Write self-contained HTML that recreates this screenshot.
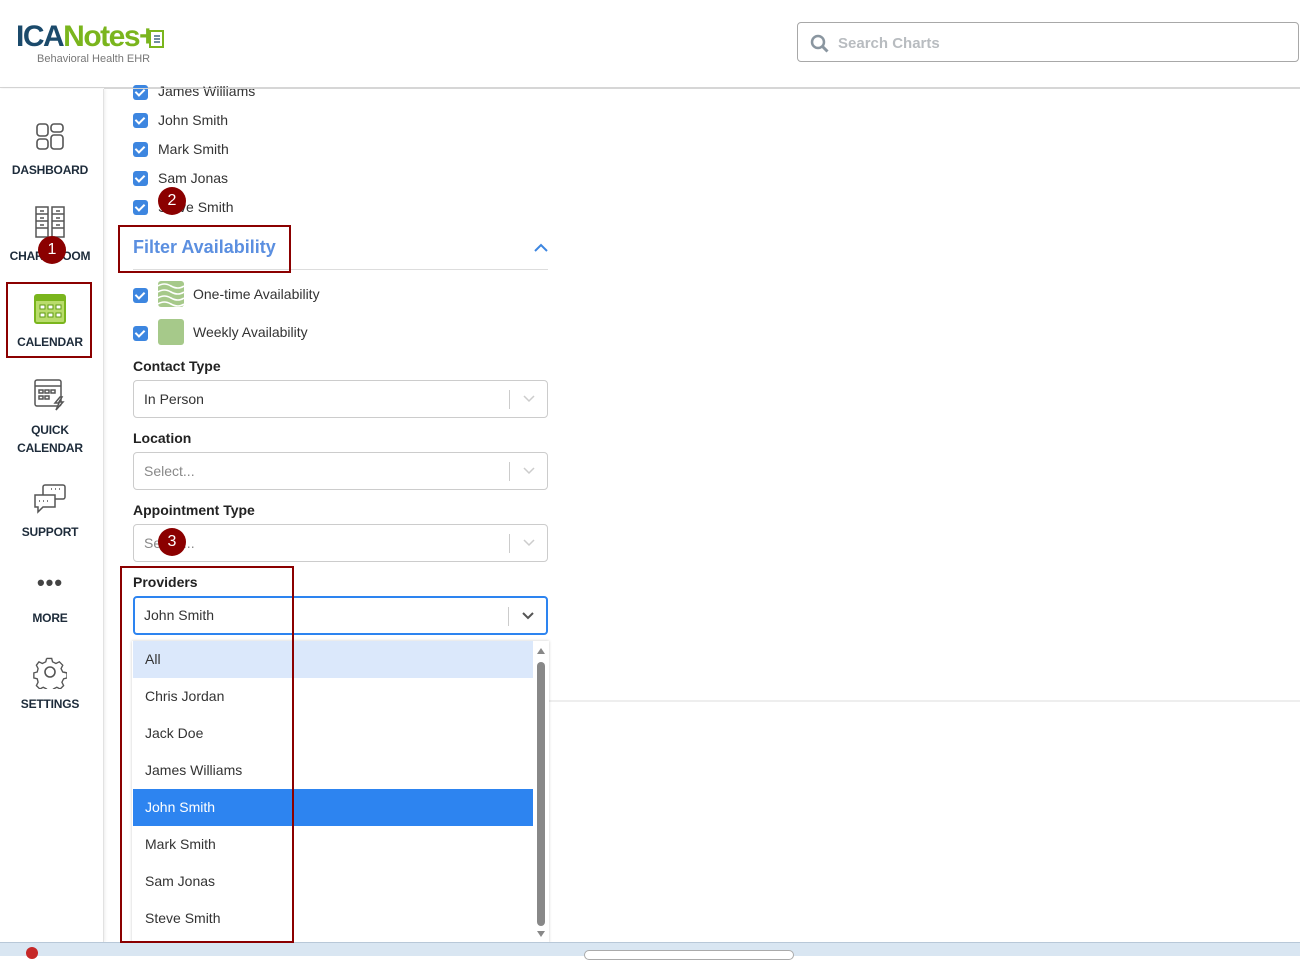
<!DOCTYPE html>
<html><head><meta charset="utf-8">
<style>
*{box-sizing:border-box;margin:0;padding:0}
body{width:1300px;height:956px;overflow:hidden;background:#fff;font-family:"Liberation Sans",sans-serif;position:relative;color:#222}
.abs{position:absolute}
.hdr{left:0;top:0;width:1300px;height:88px;border-bottom:1px solid #d6d6d6}
.side{left:0;top:89px;width:104px;height:853px;border-right:1px solid #e2e2e2;box-shadow:1px 0 3px rgba(0,0,0,.08)}
.nav{position:absolute;left:0;width:100px;text-align:center;font-size:12px;font-weight:bold;color:#1d2b3a;letter-spacing:-.2px}
.cb{position:absolute;left:133px;width:15px;height:15px;background:#3d86e0;border-radius:3px}
.cb:after{content:"";position:absolute;left:4px;top:2px;width:4px;height:7px;border:solid #fff;border-width:0 2px 2px 0;transform:rotate(45deg)}
.lbl{position:absolute;left:158px;font-size:14px;color:#333}
.fl{position:absolute;left:133px;font-size:14px;font-weight:bold;color:#222}
.sel{position:absolute;left:133px;width:415px;height:38px;border:1px solid #ccc;border-radius:4px;font-size:14px;color:#333;padding:10px 10px}
.sel .sep{position:absolute;right:37px;top:9px;width:1px;height:19px;background:#ccc}
.sel svg{position:absolute;right:12px;top:14px}
.ph{color:#888}
.red{position:absolute;border:2px solid #8b0000}
.num{position:absolute;width:28px;height:28px;border-radius:50%;background:#8b0000;color:#fff;font-size:16px;text-align:center;line-height:28px}
.opt{position:absolute;left:133px;width:400px;height:37px;font-size:14px;color:#333;padding:10px 12px}
</style></head><body>
<div class="abs hdr">
 <div class="abs" style="left:16px;top:20px;font-size:30px;font-weight:bold;letter-spacing:-1.5px;line-height:34px"><span style="color:#1b4a6b">ICA</span><span style="color:#7ab51d">Notes</span><span style="color:#7ab51d">+</span></div>
 <svg class="abs" style="left:148px;top:28px" width="20" height="22"><rect x="2" y="3" width="13" height="16" fill="#fff" stroke="#7ab51d" stroke-width="2"/><path d="M6 8h6M6 11h6M6 14h6" stroke="#1b4a6b" stroke-width="1.3"/></svg>
 <div class="abs" style="left:37px;top:53px;font-size:11px;color:#777">Behavioral Health EHR</div>
 <div class="abs" style="left:797px;top:22px;width:502px;height:40px;border:1px solid #a8a8a8;border-radius:4px">
  <svg class="abs" style="left:12px;top:11px" width="20" height="20"><circle cx="8" cy="8" r="6" fill="none" stroke="#8a96a0" stroke-width="2.5"/><path d="M12.5 12.5l5 5" stroke="#8a96a0" stroke-width="3"/></svg>
  <div class="abs" style="left:40px;top:12px;font-size:15px;font-weight:bold;color:#b8bcc0">Search Charts</div>
 </div>
</div>
<div class="abs side"></div>
<svg class="abs" style="left:36px;top:123px" width="28" height="28" fill="none" stroke="#555" stroke-width="1.6"><rect x="1" y="1" width="11" height="12" rx="3"/><rect x="15" y="1" width="12" height="8" rx="3"/><rect x="1" y="16" width="11" height="10" rx="3"/><rect x="15" y="12" width="12" height="14" rx="3"/></svg>
<div class="nav" style="top:163px">DASHBOARD</div>
<svg class="abs" style="left:34px;top:206px" width="32" height="32" fill="none" stroke="#555" stroke-width="1.5"><rect x="2" y="1" width="12" height="30"/><rect x="18" y="1" width="12" height="30"/><path d="M2 8h12M2 15h12M2 22h12M18 8h12M18 15h12M18 22h12M6 5h4M22 5h4M6 12h4M22 12h4M6 19h4M22 19h4"/></svg>
<div class="nav" style="top:249px">CHART ROOM</div>
<div class="num" style="left:38px;top:236px">1</div>
<div class="red" style="left:6px;top:282px;width:86px;height:76px"></div>
<svg class="abs" style="left:34px;top:293px" width="32" height="32"><rect x="1" y="2" width="30" height="28" rx="2" fill="#b9dc6c" stroke="#7ab51d" stroke-width="2"/><rect x="1" y="2" width="30" height="6" fill="#7ab51d"/><g fill="#fff" stroke="#5e9a12" stroke-width="1"><rect x="6" y="12" width="5" height="4"/><rect x="14" y="12" width="5" height="4"/><rect x="22" y="12" width="5" height="4"/><rect x="6" y="20" width="5" height="4"/><rect x="14" y="20" width="5" height="4"/><rect x="22" y="20" width="5" height="4"/></g></svg>
<div class="nav" style="top:335px">CALENDAR</div>
<svg class="abs" style="left:34px;top:379px" width="32" height="32" fill="none" stroke="#555" stroke-width="1.5"><rect x="1" y="1" width="26" height="26" rx="2"/><path d="M1 7h26"/><rect x="5" y="11" width="4" height="3"/><rect x="11" y="11" width="4" height="3"/><rect x="17" y="11" width="4" height="3"/><rect x="5" y="17" width="4" height="3"/><rect x="11" y="17" width="4" height="3"/><path d="M26 18l-5 6h4l-3 7 7-8h-4l3-5z" fill="#fff"/></svg>
<div class="nav" style="top:421px;line-height:18px">QUICK<br>CALENDAR</div>
<svg class="abs" style="left:33px;top:484px" width="34" height="30" fill="none" stroke="#555" stroke-width="1.5"><rect x="10" y="1" width="22" height="14" rx="2"/><path d="M2 11h20v12H10l-5 5v-5H2z" fill="#fff"/><path d="M18 5h1M22 5h1M26 5h1M6 17h1M10 17h1M14 17h1"/></svg>
<div class="nav" style="top:525px">SUPPORT</div>
<div class="nav" style="top:570px;font-size:22px;color:#444;letter-spacing:1px">•••</div>
<div class="nav" style="top:611px">MORE</div>
<svg class="abs" style="left:33px;top:655px" width="34" height="34" fill="none" stroke="#555" stroke-width="1.6"><path d="M14 2h6l1 4 4 2 4-2 4 4-2 4 2 4 4 1v0M14 2l-1 4-4 2-4-2-3 4 2 4-1 4-4 1v6l4 1 1 4-2 4 4 4 4-2 4 2 1 4h6l1-4 4-2 4 2 4-4-2-4 2-4 4-1v-6l-4-1" transform="scale(.85) translate(2 2)"/><circle cx="17" cy="17" r="5"/></svg>
<div class="nav" style="top:697px">SETTINGS</div>

<div class="cb" style="top:85px"></div><div class="lbl" style="top:83px">James Williams</div>
<div class="abs" style="left:104px;top:88px;width:1196px;height:1px;background:#d6d6d6"></div>
<div class="cb" style="top:113px"></div><div class="lbl" style="top:112px">John Smith</div>
<div class="cb" style="top:142px"></div><div class="lbl" style="top:141px">Mark Smith</div>
<div class="cb" style="top:171px"></div><div class="lbl" style="top:170px">Sam Jonas</div>
<div class="cb" style="top:200px"></div><div class="lbl" style="top:199px">Steve Smith</div>
<div class="num" style="left:158px;top:187px">2</div>

<div class="abs" style="left:133px;top:237px;font-size:18px;font-weight:bold;color:#5b8fe0">Filter Availability</div>
<svg class="abs" style="left:534px;top:243px" width="14" height="10"><path d="M1 8l6-6 6 6" fill="none" stroke="#3d86e0" stroke-width="2"/></svg>
<div class="abs" style="left:133px;top:269px;width:415px;height:1px;background:#ddd"></div>
<div class="red" style="left:118px;top:225px;width:173px;height:48px"></div>
<div class="cb" style="top:288px"></div>
<svg class="abs" style="left:158px;top:281px" width="26" height="26"><rect width="26" height="26" rx="3" fill="#a6c98a"/><path d="M0 5q6-4 13 0t13 0M0 11q6-4 13 0t13 0M0 17q6-4 13 0t13 0M0 23q6-4 13 0t13 0" stroke="#fff" stroke-width="1.6" fill="none"/></svg>
<div class="abs" style="left:193px;top:286px;font-size:14px;color:#333">One-time Availability</div>
<div class="cb" style="top:326px"></div>
<div class="abs" style="left:158px;top:319px;width:26px;height:26px;border-radius:3px;background:#a6c98a"></div>
<div class="abs" style="left:193px;top:324px;font-size:14px;color:#333">Weekly Availability</div>

<div class="fl" style="top:358px">Contact Type</div>
<div class="sel" style="top:380px">In Person<div class="sep"></div><svg width="12" height="8"><path d="M1 1l5 5 5-5" fill="none" stroke="#ccc" stroke-width="1.5"/></svg></div>
<div class="fl" style="top:430px">Location</div>
<div class="sel" style="top:452px"><span class="ph">Select...</span><div class="sep"></div><svg width="12" height="8"><path d="M1 1l5 5 5-5" fill="none" stroke="#ccc" stroke-width="1.5"/></svg></div>
<div class="fl" style="top:502px">Appointment Type</div>
<div class="sel" style="top:524px"><span class="ph">Select...</span><div class="sep"></div><svg width="12" height="8"><path d="M1 1l5 5 5-5" fill="none" stroke="#ccc" stroke-width="1.5"/></svg></div>
<div class="num" style="left:158px;top:528px">3</div>
<div class="fl" style="top:574px">Providers</div>
<div class="sel" style="top:596px;border:2px solid #2d84f0;height:39px;padding:9px 9px">John Smith<div class="sep"></div><svg width="12" height="8"><path d="M1 1l5 5 5-5" fill="none" stroke="#555" stroke-width="2"/></svg></div>

<div class="abs" style="left:548px;top:700px;width:752px;height:2px;background:#eee"></div>
<div class="abs" style="left:132px;top:641px;width:417px;height:302px;background:#fff;box-shadow:0 0 3px rgba(0,0,0,.2)"></div>
<div class="opt" style="top:641px;background:#dbe8fb">All</div>
<div class="opt" style="top:678px">Chris Jordan</div>
<div class="opt" style="top:715px">Jack Doe</div>
<div class="opt" style="top:752px">James Williams</div>
<div class="opt" style="top:789px;background:#2d84f0;color:#fff">John Smith</div>
<div class="opt" style="top:826px">Mark Smith</div>
<div class="opt" style="top:863px">Sam Jonas</div>
<div class="opt" style="top:900px">Steve Smith</div>
<svg class="abs" style="left:535px;top:645px" width="12" height="296"><path d="M2 9l4-6 4 6z" fill="#888"/><rect x="2" y="17" width="8" height="264" rx="4" fill="#888"/><path d="M2 286l4 6 4-6z" fill="#888"/></svg>

<div class="abs" style="left:0;top:942px;width:1300px;height:14px;background:#d9e6f2;border-top:1px solid #b8c8d8"></div>
<div class="abs" style="left:26px;top:947px;width:12px;height:12px;border-radius:50%;background:#c62828"></div>
<div class="abs" style="left:584px;top:950px;width:210px;height:10px;border-radius:6px;background:#fff;border:1px solid #aaa"></div>
<div class="red" style="left:120px;top:566px;width:174px;height:377px"></div>
</body></html>
